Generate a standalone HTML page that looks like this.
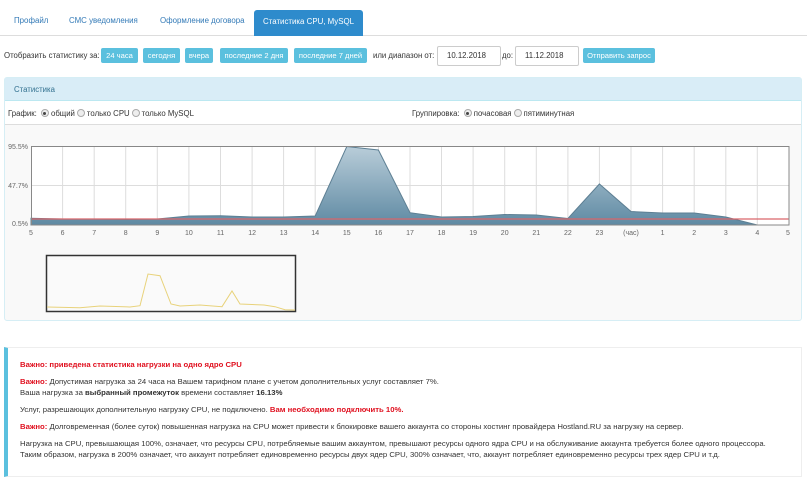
<!DOCTYPE html>
<html><head><meta charset="utf-8"><style>
*{box-sizing:border-box;margin:0;padding:0}
body{width:807px;height:475px;background:#fff;font-family:"Liberation Sans","DejaVu Sans",sans-serif;font-size:7.8px;color:#333;position:relative;overflow:hidden}
.a{position:absolute;white-space:nowrap}
.tab{color:#337ab7;font-size:7.9px}
.btn{position:absolute;background:#5bc0de;color:#fff;border-radius:2px;height:15px;line-height:15px;text-align:center;font-size:7.6px}
.inp{position:absolute;border:1px solid #ccc;border-radius:2px;height:20px;line-height:18px;padding-left:9px;font-size:7.8px;background:#fff}
.rad{display:inline-block;width:8px;height:8px;border-radius:50%;border:1px solid #aaa;background:#eee;vertical-align:-1px;margin:0 2px;position:relative}
.rad.on::after{content:"";position:absolute;left:1.5px;top:1.5px;width:3px;height:3px;border-radius:50%;background:#444}
.red{color:#e0101f;font-weight:bold}
.al{font-size:7.72px}
</style></head><body>
<div class="a" style="left:0;top:35px;width:807px;height:1px;background:#ddd"></div>
<div class="a tab" style="left:14px;top:16px">Профайл</div>
<div class="a tab" style="left:69px;top:16px">СМС уведомления</div>
<div class="a tab" style="left:160px;top:16px">Оформление договора</div>
<div class="a" style="left:254px;top:10px;width:109px;height:26px;background:#2e8bcc;border-radius:3px 3px 0 0;color:#fff;font-size:7.9px;text-align:center;line-height:24px">Статистика CPU, MySQL</div>

<div class="a" style="left:4px;top:51px">Отобразить статистику за:</div>
<div class="btn" style="left:101px;top:48px;width:37px">24 часа</div>
<div class="btn" style="left:143px;top:48px;width:37px">сегодня</div>
<div class="btn" style="left:185px;top:48px;width:28px">вчера</div>
<div class="btn" style="left:220px;top:48px;width:68px">последние 2 дня</div>
<div class="btn" style="left:294px;top:48px;width:73px">последние 7 дней</div>
<div class="a" style="left:373px;top:51px">или диапазон от:</div>
<div class="inp" style="left:437px;top:46px;width:64px">10.12.2018</div>
<div class="a" style="left:502px;top:51px">до:</div>
<div class="inp" style="left:515px;top:46px;width:64px">11.12.2018</div>
<div class="btn" style="left:583px;top:48px;width:72px">Отправить запрос</div>

<div class="a" style="left:4px;top:77px;width:798px;height:244px;border:1px solid #d6eef5;border-radius:3px;background:#f9f9f9"></div>
<div class="a" style="left:5px;top:78px;width:796px;height:23px;background:#d9edf7;border-bottom:1px solid #bce8f1"></div>
<div class="a" style="left:14px;top:85px;color:#31708f">Статистика</div>
<div class="a" style="left:5px;top:101px;width:796px;height:24px;background:#fff;border-bottom:1px solid #ddd"></div>
<div class="a" style="left:8px;top:109px">График: <span class="rad on"></span>общий<span class="rad"></span>только CPU<span class="rad"></span>только MySQL</div>
<div class="a" style="left:412px;top:109px">Группировка: <span class="rad on"></span>почасовая<span class="rad"></span>пятиминутная</div>

<svg class="a" style="left:0;top:0" width="807" height="330" font-family="Liberation Sans, sans-serif" font-size="7" fill="#666">
<defs><linearGradient id="g" x1="0" y1="0" x2="0" y2="1"><stop offset="0" stop-color="#b9cdd9"/><stop offset="1" stop-color="#5f8aa3"/></linearGradient></defs>
<rect x="31" y="146" width="758" height="79" fill="#fff"/>
<g stroke="#ddd" stroke-width="1">
<line x1="31" y1="185.5" x2="789" y2="185.5"/>
<path d="M62.6 146V225M94.2 146V225M125.7 146V225M157.3 146V225M188.9 146V225M220.5 146V225M252.1 146V225M283.6 146V225M315.2 146V225M346.8 146V225M378.4 146V225M410 146V225M441.5 146V225M473.1 146V225M504.7 146V225M536.3 146V225M567.9 146V225M599.4 146V225M631 146V225M662.6 146V225M694.2 146V225M725.8 146V225M757.3 146V225"/>
</g>
<polygon fill="url(#g)" stroke="#5d7f93" stroke-width="1" points="31,225 31,218.3 62.6,219 94.2,219 125.7,219.5 157.3,219 188.9,216 220.5,215.7 252.1,217 283.6,217 315.2,216 346.8,146.5 378.4,150 410,212.7 441.5,217 473.1,216.5 504.7,214.5 536.3,215 567.9,218.5 599.4,184 631,211.5 662.6,213 694.2,213 725.8,217 757.3,225 789,225"/>
<line x1="31" y1="219" x2="789" y2="219" stroke="#d9666a" stroke-width="1.2"/>
<rect x="31.5" y="146.5" width="757.5" height="78.5" fill="none" stroke="#888"/>
<text x="28" y="149" text-anchor="end">95.5%</text>
<text x="28" y="188" text-anchor="end">47.7%</text>
<text x="28" y="226" text-anchor="end">0.5%</text>
<g text-anchor="middle">
<text x="31" y="235">5</text><text x="62.6" y="235">6</text><text x="94.2" y="235">7</text><text x="125.7" y="235">8</text><text x="157.3" y="235">9</text><text x="188.9" y="235">10</text><text x="220.5" y="235">11</text><text x="252.1" y="235">12</text><text x="283.6" y="235">13</text><text x="315.2" y="235">14</text><text x="346.8" y="235">15</text><text x="378.4" y="235">16</text><text x="410" y="235">17</text><text x="441.5" y="235">18</text><text x="473.1" y="235">19</text><text x="504.7" y="235">20</text><text x="536.3" y="235">21</text><text x="567.9" y="235">22</text><text x="599.4" y="235">23</text><text x="631" y="235">(час)</text><text x="662.6" y="235">1</text><text x="694.2" y="235">2</text><text x="725.8" y="235">3</text><text x="757.3" y="235">4</text><text x="788" y="235">5</text>
</g>
<rect x="46.5" y="255.5" width="249" height="56" fill="#fafafa" stroke="#333" stroke-width="1.5"/>
<polyline fill="none" stroke="#e8d27a" stroke-width="1" points="47,307 80,307.7 100,306 130,307 140,305.7 148,274 160,275.7 171,304 180,306 200,305 222,306.7 232,291 240,304 264,305 275,306.7 285,309.7 295,310"/>
</svg>

<div class="a" style="left:4px;top:347px;width:798px;height:130px;border:1px solid #eee;border-left:4px solid #5bc0de;background:#fff"></div>
<div class="a al red" style="left:20px;top:360px">Важно: приведена статистика нагрузки на одно ядро CPU</div>
<div class="a al" style="left:20px;top:377px"><span class="red">Важно:</span> Допустимая нагрузка за 24 часа на Вашем тарифном плане с учетом дополнительных услуг составляет 7%.</div>
<div class="a al" style="left:20px;top:388px">Ваша нагрузка за <b>выбранный промежуток</b> времени составляет <b>16.13%</b></div>
<div class="a al" style="left:20px;top:405px">Услуг, разрешающих дополнительную нагрузку CPU, не подключено. <span class="red">Вам необходимо подключить 10%.</span></div>
<div class="a al" style="left:20px;top:422px"><span class="red">Важно:</span> Долговременная (более суток) повышенная нагрузка на CPU может привести к блокировке вашего аккаунта со стороны хостинг провайдера Hostland.RU за нагрузку на сервер.</div>
<div class="a al" style="left:20px;top:439px">Нагрузка на CPU, превышающая 100%, означает, что ресурсы CPU, потребляемые вашим аккаунтом, превышают ресурсы одного ядра CPU и на обслуживание аккаунта требуется более одного процессора.</div>
<div class="a al" style="left:20px;top:450px">Таким образом, нагрузка в 200% означает, что аккаунт потребляет единовременно ресурсы двух ядер CPU, 300% означает, что, аккаунт потребляет единовременно ресурсы трех ядер CPU и т.д.</div>
</body></html>
